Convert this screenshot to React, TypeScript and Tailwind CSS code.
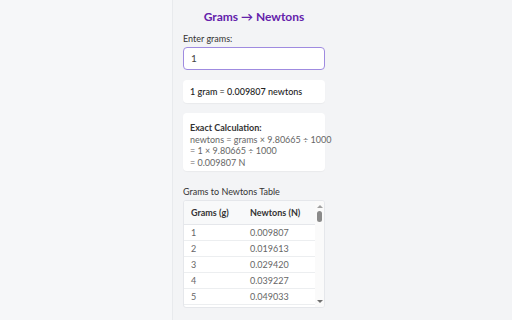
const ROWS = [
  ["1", "0.009807"],
  ["2", "0.019613"],
  ["3", "0.029420"],
  ["4", "0.039227"],
  ["5", "0.049033"],
];

export default function App() {
  return (
    <div className="flex h-[320px] w-[512px] bg-[#f3f4f6] font-['Lato',sans-serif]">
      <div className="h-full w-[173px] border-r border-[#e8eaed] bg-[#f6f7f9]" />

      <div className="ml-[10px] flex w-[142px] flex-col pt-[8px]">
        <h1 className="text-center text-[12px] font-bold leading-[18px] text-[#6321ab]">
          Grams → Newtons
        </h1>

        <label className="mt-[7px] text-[9px] leading-[12px] text-[#333]">Enter grams:</label>
        <div className="mt-[2px] flex h-[23px] items-center rounded-[4px] border border-[#9f8be0] bg-white px-[7px] text-[10px] text-[#444]">
          1
        </div>

        <div className="mt-[10px] flex h-[23px] items-center rounded-[4px] bg-white px-[7px] text-[9px] font-medium text-[#222] shadow-[0_1px_1px_rgba(0,0,0,0.04)]">
          1 gram = 0.009807 newtons
        </div>

        <div className="mt-[10px] rounded-[4px] bg-white px-[7px] pb-[3px] pt-[9px] text-[9px] leading-[11.5px] text-[#666] shadow-[0_1px_1px_rgba(0,0,0,0.04)]">
          <div className="font-bold text-[#333]">Exact Calculation:</div>
          <div className="whitespace-nowrap">newtons = grams × 9.80665 ÷ 1000</div>
          <div>= 1 × 9.80665 ÷ 1000</div>
          <div>= 0.009807 N</div>
        </div>

        <div className="mt-[15px] text-[9px] leading-[12px] text-[#333]">Grams to Newtons Table</div>

        <div className="mt-[2px] flex h-[108px] overflow-hidden rounded-[3px] border border-[#e5e7eb] bg-white">
          <div className="flex-1 overflow-hidden">
            <div className="flex h-[24px] items-center border-b border-[#e5e7eb] bg-[#f8f9fa] text-[9px] font-bold text-[#333]">
              <div className="w-[66px] pl-[7px]">Grams (g)</div>
              <div className="flex-1">Newtons (N)</div>
            </div>
            {ROWS.map(([g, n]) => (
              <div
                key={g}
                className="flex h-[16px] items-center border-b border-[#eceef0] text-[9px] text-[#666]"
              >
                <div className="w-[66px] pl-[7px]">{g}</div>
                <div className="flex-1">{n}</div>
              </div>
            ))}
          </div>
          <div className="flex w-[9px] flex-col items-center bg-[#fafafa] pt-[4px] pb-[4px]">
            <div className="h-0 w-0 border-x-[3px] border-b-[3px] border-x-transparent border-b-[#a0a0a0]" />
            <div className="mt-[3px] h-[11px] w-[5px] rounded-full bg-[#8a8a8a]" />
            <div className="flex-1" />
            <div className="h-0 w-0 border-x-[3px] border-t-[3px] border-x-transparent border-t-[#707070]" />
          </div>
        </div>
      </div>
    </div>
  );
}
